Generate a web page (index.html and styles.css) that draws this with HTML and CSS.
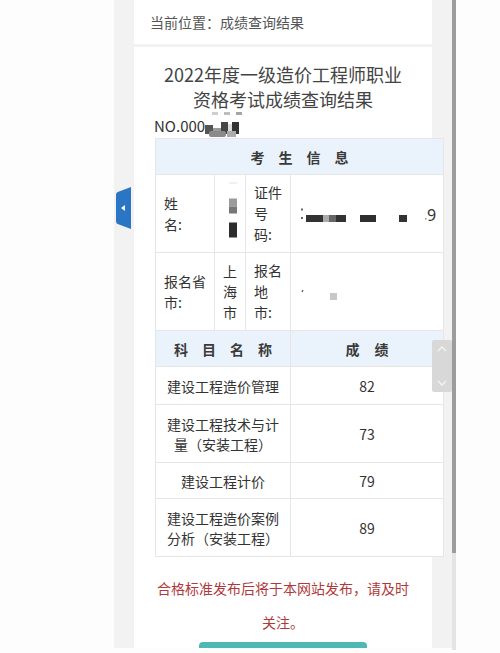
FILE: index.html
```html
<!DOCTYPE html>
<html lang="zh-CN">
<head>
<meta charset="utf-8">
<title>成绩查询结果</title>
<link rel="stylesheet" href="styles.css">
</head>
<body>
<div class="screen">
  <div class="phone">
    <div class="crumb">当前位置：成绩查询结果</div>
    <div class="main">
      <h1 class="title">2022年度一级造价工程师职业<br>资格考试成绩查询结果</h1>
      <div class="no">NO.000<svg class="no-blur" width="40" height="30" viewBox="0 0 40 30">
          <rect x="7" y="0" width="6" height="3" fill="#cfcfcf"/>
          <rect x="19" y="0" width="6" height="3" fill="#bdbdbd"/>
          <rect x="31" y="0" width="6" height="3" fill="#a5a5a5"/>
          <rect x="0" y="13" width="8" height="9" fill="#555"/>
          <rect x="8" y="16" width="8" height="6" fill="#9a9a9a"/>
          <rect x="16" y="10" width="7" height="12" fill="#454545"/>
          <rect x="23" y="12" width="4" height="10" fill="#dcdcdc"/>
          <rect x="27" y="10" width="7" height="12" fill="#333"/>
          <rect x="4" y="19" width="17" height="6" rx="2" fill="#8a8a8a"/>
          <rect x="22" y="19" width="9" height="6" fill="#ababab"/>
        </svg></div>
      <table class="result">
        <colgroup>
          <col class="c1"><col class="c2"><col class="c3"><col class="c4">
        </colgroup>
        <tr><th colspan="4" class="hd">考生信息</th></tr>
        <tr class="info">
          <td class="lbl">姓<br>名:</td>
          <td class="pic"><svg width="31" height="64" viewBox="0 0 31 64">
              <rect x="14" y="0.5" width="8" height="1" fill="#e2e2e2"/>
              <rect x="14" y="16.5" width="8" height="8" fill="#9b9b9b"/>
              <rect x="14" y="24.5" width="8" height="7" fill="#777"/>
              <rect x="14" y="40.5" width="8" height="15" fill="#2d2d2d"/>
            </svg></td>
          <td class="lbl">证件号码:</td>
          <td class="pic"><div class="idline"><svg width="136" height="20" viewBox="0 0 136 20">
              <rect x="10" y="4.5" width="2" height="2" fill="#666"/>
              <rect x="10" y="13" width="2" height="2" fill="#666"/>
              <rect x="15" y="11" width="17" height="7" fill="#333"/>
              <rect x="32" y="11" width="6" height="7" fill="#ababab"/>
              <rect x="38" y="11" width="7" height="7" fill="#666"/>
              <rect x="45" y="11" width="10" height="7" fill="#333"/>
              <rect x="69" y="11" width="16" height="7" fill="#2f2f2f"/>
              <rect x="108" y="11" width="8" height="7" fill="#333"/>
              <rect x="134" y="14" width="1.5" height="1.5" fill="#888"/>
            </svg><span class="digit">9</span></div></td>
        </tr>
        <tr class="info">
          <td class="lbl">报名省市:</td>
          <td class="mid">上海市</td>
          <td class="lbl">报名地市:</td>
          <td class="pic"><svg width="153" height="20" viewBox="0 0 153 20">
              <path d="M12 8 L11 10" stroke="#555" stroke-width="1.2"/>
              <rect x="39" y="11" width="7" height="7" fill="#c8c8c8"/>
            </svg></td>
        </tr>
        <tr><th colspan="3" class="hd">科目名称</th><th class="hd hd-score">成绩</th></tr>
        <tr class="score"><td colspan="3">建设工程造价管理</td><td>82</td></tr>
        <tr class="score"><td colspan="3">建设工程技术与计量（安装工程）</td><td>73</td></tr>
        <tr class="score short"><td colspan="3">建设工程计价</td><td>79</td></tr>
        <tr class="score"><td colspan="3">建设工程造价案例分析（安装工程）</td><td>89</td></tr>
      </table>
      <p class="notice">合格标准发布后将于本网站发布，请及时关注。</p>
      <div class="btn"></div>
    </div>
    <div class="tab"><svg width="16" height="44" viewBox="0 0 16 44">
        <path d="M0 9 Q0 6 3 5.5 L15 1 L15 43 L3 38.5 Q0 38 0 35 Z" fill="#2b76c4"/>
        <path d="M5 22 L9 19 L9 25 Z" fill="#fff"/>
      </svg></div>
    <div class="scroll-btns">
      <svg width="20" height="52" viewBox="0 0 20 52">
        <path d="M6 11 L10 7 L14 11" fill="none" stroke="#f4f4f4" stroke-width="1.3"/>
        <path d="M6 41 L10 45 L14 41" fill="none" stroke="#f4f4f4" stroke-width="1.3"/>
      </svg>
    </div>
  </div>
  <div class="scrollbar"><div class="thumb"></div></div>
</div>
</body>
</html>
```

FILE: styles.css
```css
* { box-sizing: border-box; }

body {
  margin: 0;
  background: #fdfdfd;
  font-family: "Noto Sans CJK SC", "Noto Sans", sans-serif;
  color: #333;
}

.screen {
  display: flex;
  padding-left: 114px;
}

.phone {
  position: relative;
  width: 338px;
  height: 648px;
  overflow: hidden;
  background: #f2f2f2;
}

.crumb {
  margin-left: 20px;
  width: 298px;
  height: 44px;
  padding-left: 16px;
  background: #fff;
  font-size: 14px;
  line-height: 45px;
  color: #555;
}

.main {
  margin: 3px 0 0 20px;
  width: 298px;
  height: 601px;
  padding-top: 15px;
  background: #fff;
}

.title {
  margin: 0;
  font-size: 18px;
  font-weight: normal;
  line-height: 25px;
  text-align: center;
  color: #444;
}

.no {
  display: flex;
  align-items: center;
  height: 18px;
  margin: 5px 0 3px 20px;
  font-size: 15px;
  line-height: 18px;
  color: #333;
}

.no-blur {
  flex: none;
  margin-top: 2px;
}

.result {
  width: 288px;
  margin-left: 21px;
  border-collapse: collapse;
  table-layout: fixed;
  font-size: 14px;
  line-height: 21px;
  background: #fff;
}

.c1 { width: 59px; }
.c2 { width: 31px; }
.c3 { width: 45px; }
.c4 { width: 153px; }

.result th,
.result td {
  border: 1px solid #e6e6e6;
  padding: 0 8px;
}

.result th.hd {
  height: 36px;
  padding: 0 0 0 14px;
  background: #eaf3fb;
  font-weight: bold;
  color: #3a3a3a;
  line-height: 20px;
  letter-spacing: 14px;
  text-align: center;
  white-space: nowrap;
}

.result th.hd-score {
  padding-left: 15px;
  letter-spacing: 15px;
}

.info td {
  padding-top: 7px;
  padding-bottom: 7px;
  vertical-align: middle;
}

.result td.lbl {
  text-align: left;
}

.result td.mid {
  text-align: center;
  line-height: 20.5px;
}

.result td.pic {
  padding: 0;
}

.pic svg {
  display: block;
  flex: none;
}

.idline {
  display: flex;
  align-items: center;
}

.digit {
  font-family: "Noto Sans", sans-serif;
  font-size: 16px;
  line-height: 20px;
  margin-top: 2px;
  color: #333;
}

.score td {
  padding-top: 8.5px;
  padding-bottom: 8.5px;
  line-height: 20px;
  text-align: center;
  vertical-align: middle;
}

.score.short td {
  padding-top: 7.5px;
  padding-bottom: 7.5px;
}

.notice {
  margin: 14px 0 0;
  padding: 0 20px;
  font-size: 14px;
  line-height: 34px;
  color: #b0393b;
  text-align: center;
}

.btn {
  margin: 3px auto 0;
  width: 168px;
  height: 40px;
  border-radius: 4px;
  background: #4db8b4;
}

.tab {
  position: absolute;
  left: 2px;
  top: 186px;
  width: 16px;
  height: 44px;
}

.tab svg { display: block; }

.scroll-btns {
  position: absolute;
  left: 318px;
  top: 340px;
  width: 20px;
  height: 52px;
  background: #d8d8d8;
  border-radius: 2px;
}

.scroll-btns svg { display: block; }

.scrollbar {
  width: 4px;
  height: 650px;
  background: #e4e4e4;
}

.thumb {
  height: 553px;
  background: #9c9c9c;
}
```
